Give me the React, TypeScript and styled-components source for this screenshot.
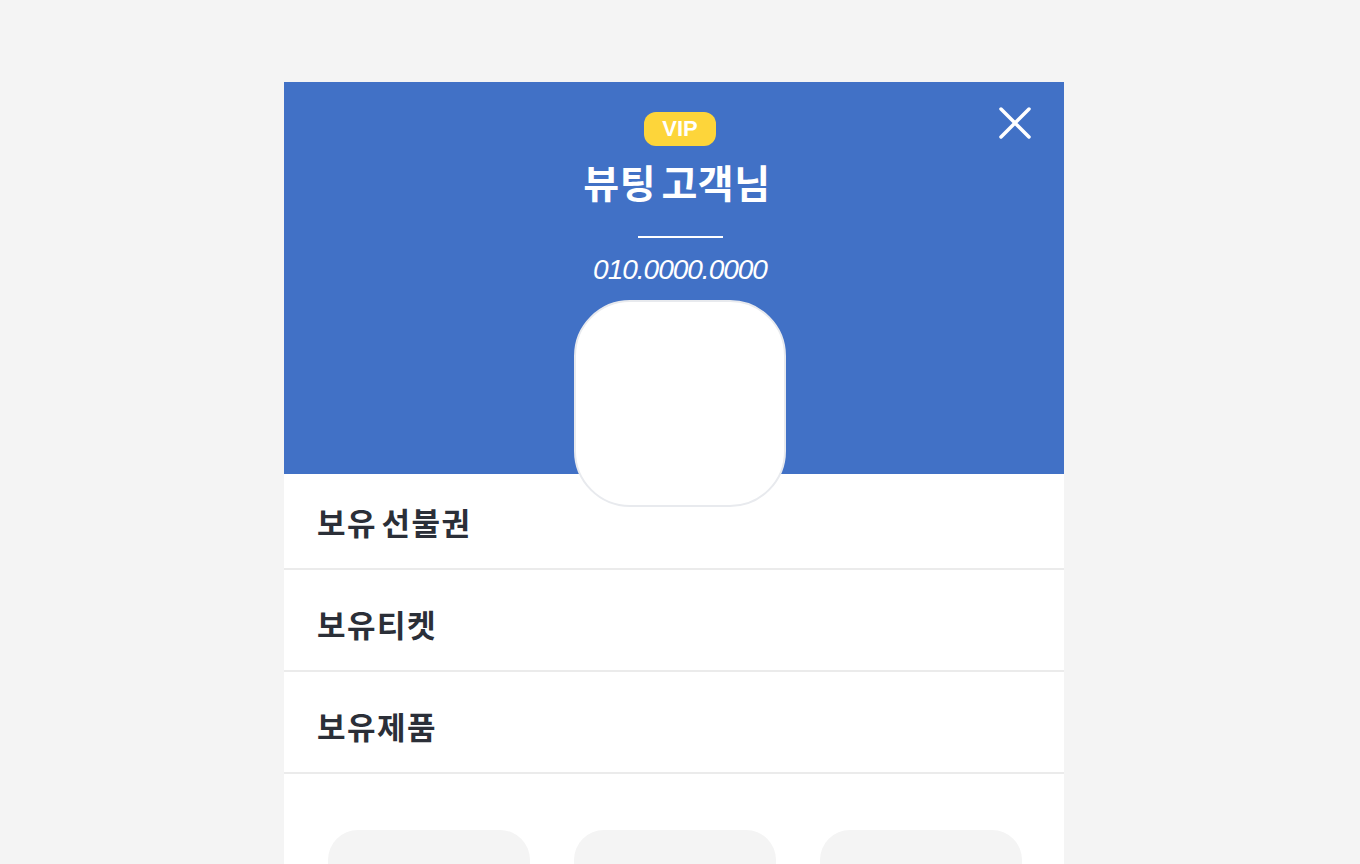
import styled, { createGlobalStyle } from "styled-components";

const GlobalStyle = createGlobalStyle`
  html, body {
    margin: 0;
    padding: 0;
    background: #f4f4f4;
    font-family: "Noto Sans CJK KR", "Noto Sans", sans-serif;
  }
  * { box-sizing: border-box; }
`;

const Panel = styled.div`
  width: 780px;
  margin: 82px 0 0 284px;
  background: #ffffff;
`;

const Header = styled.header`
  position: relative;
  background: #4171c6;
  height: 392px;
  display: flex;
  flex-direction: column;
  align-items: center;
  padding: 30px 0 0 12px;

  & > * {
    flex-shrink: 0;
  }
`;

const CloseButton = styled.button`
  position: absolute;
  top: 24px;
  right: 32px;
  width: 34px;
  height: 34px;
  padding: 0;
  border: none;
  background: transparent;
  display: flex;
  align-items: center;
  justify-content: center;
  cursor: pointer;
`;

const Badge = styled.span`
  display: inline-flex;
  align-items: center;
  justify-content: center;
  width: 72px;
  height: 34px;
  border-radius: 12px;
  background: #fdd53a;
  color: #ffffff;
  font-family: "Liberation Sans", Arial, sans-serif;
  font-weight: 700;
  font-size: 22px;
`;

const Name = styled.h1`
  margin: 13px 0 0 -6px;
  color: #ffffff;
  font-size: 39px;
  font-weight: 700;
  line-height: 44px;
  letter-spacing: 0.5px;
  word-spacing: -4px;
`;

const Divider = styled.div`
  width: 85px;
  height: 2px;
  background: #ffffff;
  margin-top: 33px;
`;

const Phone = styled.div`
  margin-top: 16px;
  color: #ffffff;
  font-family: "Liberation Sans", Arial, sans-serif;
  font-style: italic;
  font-size: 28px;
  line-height: 32px;
  letter-spacing: -1px;
`;

const Avatar = styled.div`
  position: relative;
  z-index: 1;
  margin-top: 14px;
  width: 212px;
  height: 207px;
  border-radius: 56px;
  border: 2px solid #e8eaee;
  background: #ffffff;
`;

const Menu = styled.ul`
  list-style: none;
  margin: 0;
  padding: 0;
`;

const MenuRow = styled.li<{ $first?: boolean }>`
  height: ${(p) => (p.$first ? 96 : 102)}px;
  padding: ${(p) => (p.$first ? "0" : "6px")} 33px 0;
  display: flex;
  align-items: center;
  border-bottom: 2px solid #ebebeb;
  color: #2b2f38;
  font-size: 31px;
  font-weight: 700;
  letter-spacing: 1.5px;
  word-spacing: -4px;
  white-space: pre;
`;

const Cards = styled.div`
  display: grid;
  grid-template-columns: repeat(3, 1fr);
  gap: 44px;
  padding: 56px 42px 40px 44px;
`;

const Card = styled.div`
  height: 200px;
  border-radius: 30px;
  background: #f4f4f4;
`;

const CloseIcon = () => (
  <svg width="32" height="32" viewBox="0 0 32 32" fill="none">
    <path d="M2 2 L30 30 M30 2 L2 30" stroke="#ffffff" strokeWidth="3.5" strokeLinecap="round" />
  </svg>
);

const menus = ["보유 선불권", "보유티켓", "보유제품"];

export default function App() {
  return (
    <>
      <GlobalStyle />
      <Panel>
        <Header>
          <CloseButton aria-label="닫기">
            <CloseIcon />
          </CloseButton>
          <Badge>VIP</Badge>
          <Name>뷰팅 고객님</Name>
          <Divider />
          <Phone>010.0000.0000</Phone>
          <Avatar />
        </Header>
        <Menu>
          {menus.map((m, i) => (
            <MenuRow key={m} $first={i === 0}>
              {m}
            </MenuRow>
          ))}
        </Menu>
        <Cards>
          <Card />
          <Card />
          <Card />
        </Cards>
      </Panel>
    </>
  );
}
